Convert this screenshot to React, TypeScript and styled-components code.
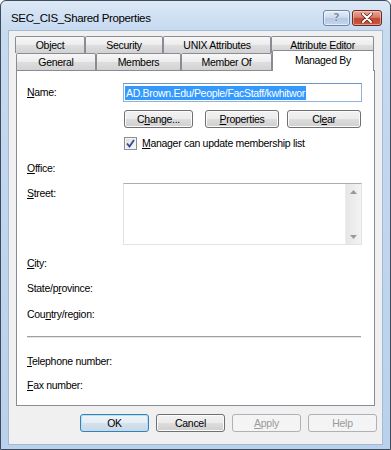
import React from "react";
import styled, { createGlobalStyle, css } from "styled-components";

const Global = createGlobalStyle`
  html, body { margin: 0; padding: 0; background: #ffffff; }
  body {
    font-family: "Liberation Sans", Arial, sans-serif;
    font-size: 10.5px;
    letter-spacing: -0.3px;
    color: #000;
  }
  * { box-sizing: border-box; }
`;

const Window = styled.div`
  width: 391px;
  height: 450px;
  border: 1px solid #3d4b5c;
  border-radius: 6px 6px 0 0;
  background: linear-gradient(#dce8f6 0px, #c6daf0 29px, #b9d1ec 100%);
  display: flex;
  flex-direction: column;
  overflow: hidden;
`;

const TitleBar = styled.div`
  height: 29px;
  padding: 4px 8px 0 10px;
  display: flex;
  align-items: center;
`;

const Title = styled.div`
  flex: 1;
  font-size: 11.5px;
  letter-spacing: -0.35px;
  color: #000;
`;

const CaptionButtons = styled.div`
  display: flex;
  gap: 2px;
`;

const CaptionButton = styled.div<{ $close?: boolean }>`
  height: 16px;
  width: ${(p) => (p.$close ? 30 : 27)}px;
  border-radius: 3px;
  display: flex;
  align-items: center;
  justify-content: center;
  ${(p) =>
    p.$close
      ? css`
          border: 1px solid #6e2a22;
          background: linear-gradient(#e9a99b 0%, #d47d6c 45%, #c2462f 55%, #c95a40 100%);
          box-shadow: inset 0 0 0 1px rgba(255, 220, 210, 0.5);
        `
      : css`
          border: 1px solid #6f87a6;
          background: linear-gradient(#e4eef8 0%, #cddcee 45%, #b4c9e3 55%, #c3d6ec 100%);
          box-shadow: inset 0 0 0 1px rgba(255, 255, 255, 0.55);
        `}
`;

const HelpGlyph = styled.span`
  font-family: "DejaVu Sans", sans-serif;
  font-weight: bold;
  font-size: 11px;
  letter-spacing: 0;
  color: #7d8ea4;
  text-shadow: 0 0 1px #fff, 0 0 1px #fff;
  line-height: 1;
`;

const Body = styled.div`
  flex: 1;
  margin: 0 7px 4px;
  background: #f0f0f0;
  border: 1px solid #a5b9d0;
  padding: 5px 5px 0 6px;
  display: flex;
  flex-direction: column;
`;

const TabRow = styled.div<{ $indent?: number }>`
  display: flex;
  height: 17px;
  margin-left: ${(p) => p.$indent ?? 0}px;
`;

const Tab = styled.div<{ $w: number; $active?: boolean }>`
  width: ${(p) => p.$w}px;
  height: 17px;
  border: 1px solid #898c95;
  border-bottom: none;
  border-radius: 2px 2px 0 0;
  background: linear-gradient(#f7f7f7 0%, #ececec 50%, #dedede 51%, #d2d2d2 100%);
  display: flex;
  align-items: center;
  justify-content: center;
  line-height: 13px;
  ${(p) =>
    p.$active &&
    css`
      height: 21px;
      margin-top: -3px;
      margin-bottom: -1px;
      background: #ffffff;
      align-items: flex-start;
      padding-top: 3px;
      position: relative;
      z-index: 1;
    `}
`;

const Panel = styled.div`
  width: 359px;
  height: 336px;
  margin-left: 1px;
  border: 1px solid #898c95;
  background: #ffffff;
  padding: 0 10px 0 10px;
  display: flex;
  flex-direction: column;
`;

const Row = styled.div<{ $mt: number; $indent?: number; $top?: boolean }>`
  display: flex;
  align-items: ${(p) => (p.$top ? "flex-start" : "center")};
  margin-top: ${(p) => p.$mt}px;
  margin-left: ${(p) => p.$indent ?? 0}px;
`;

const Label = styled.div<{ $w?: number; $mt?: number }>`
  width: ${(p) => p.$w ?? 96}px;
  line-height: 13px;
  white-space: nowrap;
  margin-top: ${(p) => p.$mt ?? 0}px;
`;

const U = styled.span`
  text-decoration: underline;
  text-underline-offset: 1px;
`;

const TextBox = styled.div`
  width: 239px;
  height: 19px;
  border: 1px solid #8fb2dc;
  border-top-color: #6e94c4;
  background: #fff;
  padding-left: 1px;
  display: flex;
  align-items: center;
`;

const Selected = styled.span`
  background: #3399ff;
  color: #ffffff;
  line-height: 14px;
  padding: 0 1px;
  white-space: nowrap;
`;

const Button = styled.div<{ $w: number; $ml?: number; $default?: boolean; $disabled?: boolean }>`
  width: ${(p) => p.$w}px;
  height: 18px;
  margin-left: ${(p) => p.$ml ?? 0}px;
  border: 1px solid #707070;
  border-radius: 3px;
  background: linear-gradient(#f2f2f2 0%, #ebebeb 50%, #dddddd 51%, #cfcfcf 100%);
  box-shadow: inset 0 0 0 1px #fbfbfb;
  display: flex;
  align-items: center;
  justify-content: center;
  line-height: 13px;
  ${(p) =>
    p.$default &&
    css`
      border-color: #3c7fb1;
      box-shadow: inset 0 0 0 1px #b6e0f7;
      background: linear-gradient(#eef5fa 0%, #e3edf5 50%, #d5e2ec 51%, #c9d8e4 100%);
    `}
  ${(p) =>
    p.$disabled &&
    css`
      border-color: #adb2b5;
      background: #f4f4f4;
      box-shadow: none;
      color: #9a9a9a;
    `}
`;

const CheckBox = styled.div`
  width: 13px;
  height: 13px;
  border: 1px solid #8e8f8f;
  background: linear-gradient(135deg, #dcdcdc, #fbfbfb);
  box-shadow: inset 0 0 0 1px #f4f4f4;
  display: flex;
  align-items: center;
  justify-content: center;
  margin-right: 5px;
`;

const TextArea = styled.div`
  width: 239px;
  height: 62px;
  border: 1px solid #e2e3ea;
  border-top-color: #abadb3;
  background: #fff;
  display: flex;
  justify-content: flex-end;
`;

const ScrollBar = styled.div`
  width: 16px;
  height: 100%;
  background: linear-gradient(90deg, #e6e6e6, #f3f3f3);
  border-left: 1px solid #ececec;
  display: flex;
  flex-direction: column;
  justify-content: space-between;
  align-items: center;
  padding: 6px 0 5px;
`;

const Separator = styled.div<{ $mt: number }>`
  width: 334px;
  height: 2px;
  margin-top: ${(p) => p.$mt}px;
  border-top: 1px solid #a0a0a0;
  border-bottom: 1px solid #e3e3e3;
`;

const Footer = styled.div`
  display: flex;
  justify-content: flex-end;
  gap: 7px;
  margin-top: 8px;
`;

const Arrow = ({ up }: { up?: boolean }) => (
  <svg width="7" height="4" viewBox="0 0 7 4">
    <path d={up ? "M0 4 L3.5 0 L7 4 Z" : "M0 0 L7 0 L3.5 4 Z"} fill="#9a9a9a" />
  </svg>
);

export default function App() {
  return (
    <>
      <Global />
      <Window>
        <TitleBar>
          <Title>SEC_CIS_Shared Properties</Title>
          <CaptionButtons>
            <CaptionButton>
              <HelpGlyph>?</HelpGlyph>
            </CaptionButton>
            <CaptionButton $close>
              <svg width="12" height="10" viewBox="0 0 12 10">
                <path d="M2 1 L10 9 M10 1 L2 9" stroke="#5a1d15" strokeWidth="3.6" strokeLinecap="round" />
                <path d="M2 1 L10 9 M10 1 L2 9" stroke="#ffffff" strokeWidth="2.2" strokeLinecap="round" />
              </svg>
            </CaptionButton>
          </CaptionButtons>
        </TitleBar>
        <Body>
          <TabRow>
            <Tab $w={70}>Object</Tab>
            <Tab $w={78}>Security</Tab>
            <Tab $w={108}>UNIX Attributes</Tab>
            <Tab $w={103}>Attribute Editor</Tab>
          </TabRow>
          <TabRow $indent={1}>
            <Tab $w={80}>General</Tab>
            <Tab $w={85}>Members</Tab>
            <Tab $w={91}>Member Of</Tab>
            <Tab $w={102} $active>
              Managed By
            </Tab>
          </TabRow>
          <Panel>
            <Row $mt={12}>
              <Label>
                <U>N</U>ame:
              </Label>
              <TextBox>
                <Selected>AD.Brown.Edu/People/FacStaff/kwhitwor</Selected>
              </TextBox>
            </Row>
            <Row $mt={8} $indent={97}>
              <Button $w={69}>
                C<U>h</U>ange...
              </Button>
              <Button $w={74} $ml={12}>
                <U>P</U>roperties
              </Button>
              <Button $w={74} $ml={8}>
                Cl<U>e</U>ar
              </Button>
            </Row>
            <Row $mt={9} $indent={97}>
              <CheckBox>
                <svg width="9" height="9" viewBox="0 0 9 9">
                  <path d="M1 4.5 L3.5 7.5 L8 1" stroke="#2d4a9a" strokeWidth="1.8" fill="none" />
                </svg>
              </CheckBox>
              <Label $w={220}>
                <U>M</U>anager can update membership list
              </Label>
            </Row>
            <Row $mt={12}>
              <Label>
                <U>O</U>ffice:
              </Label>
            </Row>
            <Row $mt={8} $top>
              <Label $mt={4}>
                <U>S</U>treet:
              </Label>
              <TextArea>
                <ScrollBar>
                  <Arrow up />
                  <Arrow />
                </ScrollBar>
              </TextArea>
            </Row>
            <Row $mt={12}>
              <Label>
                <U>C</U>ity:
              </Label>
            </Row>
            <Row $mt={12}>
              <Label>
                State/p<U>r</U>ovince:
              </Label>
            </Row>
            <Row $mt={13}>
              <Label>
                Cou<U>n</U>try/region:
              </Label>
            </Row>
            <Separator $mt={15} />
            <Row $mt={17}>
              <Label $w={150}>
                <U>T</U>elephone number:
              </Label>
            </Row>
            <Row $mt={11}>
              <Label>
                <U>F</U>ax number:
              </Label>
            </Row>
          </Panel>
          <Footer>
            <Button $w={69} $default>
              OK
            </Button>
            <Button $w={69}>Cancel</Button>
            <Button $w={69} $disabled>
              <U>A</U>pply
            </Button>
            <Button $w={69} $disabled>
              Help
            </Button>
          </Footer>
        </Body>
      </Window>
    </>
  );
}
